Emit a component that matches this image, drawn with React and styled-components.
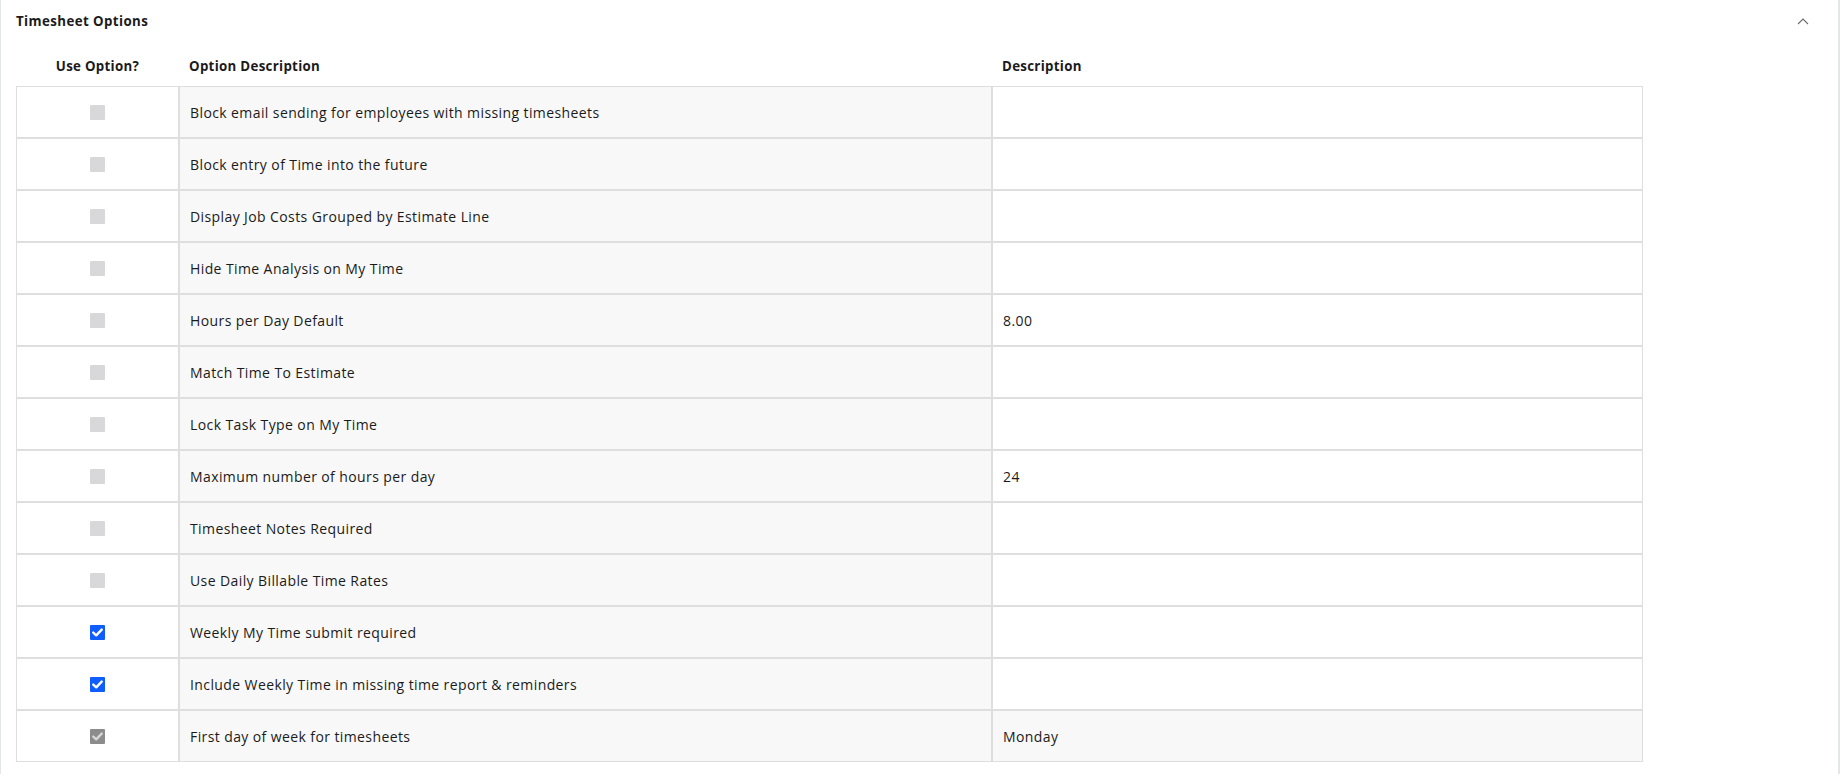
import React from "react";
import styled, { createGlobalStyle } from "styled-components";

const Global = createGlobalStyle`
  html, body { margin: 0; padding: 0; background: #fff; }
  body { font-family: "Open Sans", "Noto Sans", sans-serif; color: #1b1b1b; }
`;

const Panel = styled.section`
  width: 1840px;
  height: 774px;
  box-sizing: border-box;
  border-left: 1px solid #e4e6ea;
  border-right: 2px solid #e4e6ea;
  background: #fff;
`;

const PanelHeader = styled.div`
  height: 42px;
  display: flex;
  align-items: center;
  justify-content: space-between;
  padding: 0 15px 0 15px;
`;

const Title = styled.h2`
  margin: 0;
  font-size: 13.3px;
  font-weight: 700;
  letter-spacing: 0.4px;
`;

const Chevron = styled.button`
  border: 0;
  background: none;
  padding: 0;
  width: 14px;
  height: 10px;
  display: flex;
  align-items: center;
  justify-content: center;
  margin-right: 13px;
  cursor: pointer;
`;

const Grid = styled.div`
  margin-left: 15px;
  display: grid;
  grid-template-columns: 163px 813px 651px;
  width: 1627px;
`;

const HeadCell = styled.div`
  height: 44px;
  display: flex;
  align-items: center;
  justify-content: ${(p) => (p.$center ? "center" : "flex-start")};
  padding: ${(p) => (p.$center ? "4px 0 0 0" : "4px 0 0 10px")};
  box-sizing: border-box;
  font-size: 13.3px;
  font-weight: 700;
  letter-spacing: 0.3px;
`;

const Cell = styled.div`
  height: 52px;
  box-sizing: border-box;
  border: 1px solid #dedede;
  background: ${(p) => (p.$shade ? "#f8f8f8" : "#fff")};
  display: flex;
  align-items: center;
  justify-content: ${(p) => (p.$center ? "center" : "flex-start")};
  padding: ${(p) => (p.$center ? "0" : "0 0 0 10px")};
  font-size: 14px;
  letter-spacing: 0.4px;
  color: #1b1b1b;
`;

const Box = styled.span`
  width: 15px;
  height: 15px;
  box-sizing: border-box;
  border-radius: 1px;
  display: inline-flex;
  align-items: center;
  justify-content: center;
  background: ${(p) =>
    p.$state === "on" ? "#0f5cff" : p.$state === "locked" ? "#8c8c8c" : "#d8d8da"};
`;

const Check = ({ color }) => (
  <svg width="11" height="9" viewBox="0 0 11 9">
    <path d="M1.3 4.6 L4.2 7.3 L9.7 1.6" fill="none" stroke={color} strokeWidth="2.4" strokeLinecap="round" strokeLinejoin="round" />
  </svg>
);

const rows = [
  { label: "Block email sending for employees with missing timesheets", value: "" },
  { label: "Block entry of Time into the future", value: "" },
  { label: "Display Job Costs Grouped by Estimate Line", value: "" },
  { label: "Hide Time Analysis on My Time", value: "" },
  { label: "Hours per Day Default", value: "8.00" },
  { label: "Match Time To Estimate", value: "" },
  { label: "Lock Task Type on My Time", value: "" },
  { label: "Maximum number of hours per day", value: "24" },
  { label: "Timesheet Notes Required", value: "" },
  { label: "Use Daily Billable Time Rates", value: "" },
  { label: "Weekly My Time submit required", value: "", state: "on" },
  { label: "Include Weekly Time in missing time report & reminders", value: "", state: "on" },
  { label: "First day of week for timesheets", value: "Monday", state: "locked" },
];

export default function App() {
  return (
    <>
      <Global />
      <Panel>
        <PanelHeader>
          <Title>Timesheet Options</Title>
          <Chevron aria-label="Collapse">
            <svg width="12" height="7" viewBox="0 0 12 7">
              <path d="M1 6 L6 1 L11 6" fill="none" stroke="#6b6b6b" strokeWidth="1.1" />
            </svg>
          </Chevron>
        </PanelHeader>
        <Grid>
          <HeadCell $center>Use Option?</HeadCell>
          <HeadCell>Option Description</HeadCell>
          <HeadCell>Description</HeadCell>
          {rows.map((r) => (
            <React.Fragment key={r.label}>
              <Cell $center>
                <Box $state={r.state}>
                  {r.state === "on" && <Check color="#fff" />}
                  {r.state === "locked" && <Check color="#d6d6d6" />}
                </Box>
              </Cell>
              <Cell $shade>{r.label}</Cell>
              <Cell $shade={r.state === "locked"}>{r.value}</Cell>
            </React.Fragment>
          ))}
        </Grid>
      </Panel>
    </>
  );
}
